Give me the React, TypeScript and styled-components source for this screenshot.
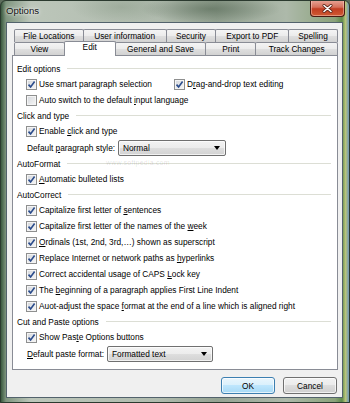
import React from "react";
import styled, { createGlobalStyle } from "styled-components";

const GlobalStyle = createGlobalStyle`
  html, body {
    margin: 0;
    padding: 0;
  }
  body {
    width: 350px;
    height: 403px;
    overflow: hidden;
    background: #5d6d5c;
  }
  * {
    box-sizing: border-box;
  }
`;

const Window = styled.div`
  width: 350px;
  height: 403px;
  display: flex;
  flex-direction: column;
  font-family: "Liberation Sans", Arial, sans-serif;
  font-size: 8.3px;
  color: #000;
  border: 1px solid #2b3a2f;
  border-radius: 6px 6px 0 0;
  overflow: hidden;
  background:
    radial-gradient(ellipse 70px 14px at 210px 8px, rgba(70, 90, 70, 0.5), transparent),
    radial-gradient(ellipse 50px 16px at 120px 6px, rgba(120, 140, 118, 0.35), transparent),
    linear-gradient(
      90deg,
      #3b5a40 0px,
      #7f957f 5px,
      #bcc6ba 30px,
      #b0bbae 45%,
      #95a393 62%,
      #adb9aa 82%,
      #8aa27a 96%,
      #5d8a4a 98%,
      #b8c47a 99%,
      #6f98b8 100%
    );
`;

const TitleBar = styled.div`
  height: 21px;
  display: flex;
  align-items: flex-start;
  padding-left: 5px;
`;

const Title = styled.span`
  font-size: 9.6px;
  line-height: 20px;
  color: #111;
  text-shadow: 0 0 5px rgba(255, 255, 255, 0.9), 0 0 2px rgba(255, 255, 255, 0.9);
`;

const CloseButton = styled.div`
  margin-left: auto;
  margin-right: 4px;
  margin-top: -1px;
  width: 35px;
  height: 17px;
  display: flex;
  align-items: center;
  justify-content: center;
  border: 1px solid #4a1a12;
  border-top: none;
  border-radius: 0 0 4px 4px;
  background: linear-gradient(#e9a79a 0%, #d5705b 45%, #c23d22 55%, #cf5a33 100%);
  box-shadow: inset 0 0 0 1px rgba(255, 220, 210, 0.45);
`;

const Client = styled.div`
  flex: 1;
  display: flex;
  flex-direction: column;
  margin: 0 6px 4px 5px;
  padding: 6px 4px 0 5px;
  border: 1px solid #52626c;
  background: #f0f0f0;
  min-height: 0;
`;

const TabStrip = styled.div`
  display: flex;
  flex-direction: column;
  padding-left: 2px;
`;

const TabRow = styled.div`
  display: flex;
  height: 13px;
`;

const Tab = styled.div<{ $w: number; $active?: boolean }>`
  position: relative;
  width: ${(p) => p.$w}px;
  height: ${(p) => (p.$active ? 15 : 13)}px;
  margin-top: ${(p) => (p.$active ? -1 : 0)}px;
  margin-left: -1px;
  z-index: ${(p) => (p.$active ? 2 : 1)};
  border: 1px solid #898c95;
  border-bottom: none;
  border-radius: 2px 2px 0 0;
  background: ${(p) =>
    p.$active
      ? "#fff"
      : "linear-gradient(#f4f4f4, #ebebeb 50%, #dfdfdf 50%, #d2d2d2)"};
  display: flex;
  align-items: ${(p) => (p.$active ? "flex-start" : "center")};
  justify-content: center;
  line-height: 11px;
  white-space: nowrap;

  &:first-child {
    margin-left: 0;
  }
`;

const Panel = styled.div`
  position: relative;
  flex: 1;
  display: flex;
  flex-direction: column;
  border: 1px solid #898c95;
  background: #fff;
  padding: 5px 6px 0 4px;
`;

const SectionHeader = styled.div`
  display: flex;
  align-items: center;
  height: 15px;
  white-space: nowrap;
`;

const Rule = styled.div`
  flex: 1;
  height: 1px;
  margin-left: 7px;
  background: #dcded5;
`;

const CheckRow = styled.div<{ $split?: boolean }>`
  display: grid;
  grid-template-columns: ${(p) => (p.$split ? "148px 1fr" : "1fr")};
  align-items: center;
  height: 16px;
  padding-left: 9px;
`;

const CheckItem = styled.label`
  display: flex;
  align-items: center;
  gap: 2px;
  white-space: nowrap;
`;

const Box = styled.span`
  width: 11px;
  height: 11px;
  flex: none;
  display: flex;
  align-items: center;
  justify-content: center;
  border: 1px solid #8e8f8f;
  background: linear-gradient(135deg, #d3d6db, #f7f7f7);
  box-shadow: inset 0 0 0 1px #f4f4f4;
`;

const SelectRow = styled.div<{ $labelWidth: number }>`
  display: grid;
  grid-template-columns: ${(p) => p.$labelWidth}px auto;
  align-items: center;
  justify-content: start;
  height: 17px;
  padding-left: 10px;
  white-space: nowrap;
`;

const Select = styled.div<{ $w: number }>`
  width: ${(p) => p.$w}px;
  height: 16px;
  display: flex;
  align-items: center;
  justify-content: space-between;
  padding: 0 5px 0 4px;
  border: 1px solid #707070;
  border-radius: 2px;
  background: linear-gradient(#f3f3f3, #ececec 50%, #dedede 50%, #d2d2d2);
  box-shadow: inset 0 0 0 1px rgba(255, 255, 255, 0.7);
`;

const Key = styled.span`
  text-decoration: underline;
  text-underline-offset: 1px;
`;

const Watermark = styled.span`
  position: absolute;
  left: 93px;
  top: 103px;
  font-size: 7px;
  color: rgba(0, 0, 0, 0.13);
  letter-spacing: 0.2px;
`;

const ButtonRow = styled.div`
  display: flex;
  justify-content: flex-end;
  gap: 8px;
  padding: 7px 1px 3px 0;
`;

const Button = styled.div<{ $default?: boolean }>`
  width: 54px;
  height: 17px;
  display: flex;
  align-items: center;
  justify-content: center;
  border-radius: 3px;
  border: 1px solid ${(p) => (p.$default ? "#3c7fb1" : "#707070")};
  background: ${(p) =>
    p.$default
      ? "linear-gradient(#eaf6fd, #d9f0fc 50%, #bee6fd 50%, #a7d9f5)"
      : "linear-gradient(#f2f2f2, #ebebeb 50%, #dddddd 50%, #cfcfcf)"};
  box-shadow: inset 0 0 0 1px rgba(255, 255, 255, 0.7);
`;

// "&x" marks the keyboard accelerator, as in a Win32 resource
const Accel = ({ text }: { text: string }) => {
  const i = text.indexOf("&");
  if (i < 0) return <>{text}</>;
  return (
    <>
      {text.slice(0, i)}
      <Key>{text[i + 1]}</Key>
      {text.slice(i + 2)}
    </>
  );
};

const Check = ({ label, checked }: { label: string; checked: boolean }) => (
  <CheckItem>
    <Box>
      {checked ? (
        <svg width="9" height="9" viewBox="0 0 9 9">
          <path d="M1.5 4.6 L3.6 6.9 L7.6 1.6" fill="none" stroke="#2b4c8c" strokeWidth="1.6" />
        </svg>
      ) : null}
    </Box>
    <span>
      <Accel text={label} />
    </span>
  </CheckItem>
);

type Item =
  | { kind: "check"; label: string; checked: boolean; second?: { label: string; checked: boolean } }
  | { kind: "select"; label: string; value: string; labelWidth: number; width: number };

type Section = { title: string; items: Item[] };

const check = (label: string, checked = true): Item => ({ kind: "check", label, checked });

const sections: Section[] = [
  {
    title: "Edit options",
    items: [
      {
        kind: "check",
        label: "Use smart paragraph selection",
        checked: true,
        second: { label: "D&rag-and-drop text editing", checked: true },
      },
      check("Auto switch to the default &input language", false),
    ],
  },
  {
    title: "Click and type",
    items: [
      check("Enable &click and type"),
      { kind: "select", label: "Default &paragraph style:", value: "Normal", labelWidth: 91, width: 108 },
    ],
  },
  {
    title: "AutoFormat",
    items: [check("&Automatic bulleted lists")],
  },
  {
    title: "AutoCorrect",
    items: [
      check("Capitalize first letter of &sentences"),
      check("Capitalize first letter of the names of the &week"),
      check("&Ordinals (1st, 2nd, 3rd,\u2026) shown as superscript"),
      check("Replace Internet or network paths as &hyperlinks"),
      check("Correct accidental usage of CAPS &Lock key"),
      check("The &beginning of a paragraph applies First Line Indent"),
      check("Auot-adjust the space &format at the end of a line which is aligned right"),
    ],
  },
  {
    title: "Cut and Paste options",
    items: [
      check("Show Pas&te Options buttons"),
      { kind: "select", label: "&Default paste format:", value: "Formatted text", labelWidth: 80, width: 106 },
    ],
  },
];

const topTabs = [
  { label: "File Locations", w: 70 },
  { label: "User information", w: 84 },
  { label: "Security", w: 51 },
  { label: "Export to PDF", w: 74 },
  { label: "Spelling", w: 50 },
];

const bottomTabs = [
  { label: "View", w: 51 },
  { label: "Edit", w: 52, active: true },
  { label: "General and Save", w: 92 },
  { label: "Print", w: 51 },
  { label: "Track Changes", w: 83 },
];

const App = () => (
  <>
    <GlobalStyle />
    <Window>
      <TitleBar>
        <Title>Options</Title>
        <CloseButton>
          <svg width="11" height="9" viewBox="0 0 11 9">
            <path d="M2 1.5 L9 7.5 M9 1.5 L2 7.5" stroke="#5a2418" strokeWidth="3" strokeLinecap="round" />
            <path d="M2 1.5 L9 7.5 M9 1.5 L2 7.5" stroke="#fff" strokeWidth="1.6" strokeLinecap="round" />
          </svg>
        </CloseButton>
      </TitleBar>
      <Client>
        <TabStrip>
          <TabRow>
            {topTabs.map((t) => (
              <Tab key={t.label} $w={t.w}>
                {t.label}
              </Tab>
            ))}
          </TabRow>
          <TabRow>
            {bottomTabs.map((t) => (
              <Tab key={t.label} $w={t.w} $active={t.active}>
                {t.label}
              </Tab>
            ))}
          </TabRow>
        </TabStrip>
        <Panel>
          {sections.map((s) => (
            <React.Fragment key={s.title}>
              <SectionHeader>
                {s.title}
                <Rule />
              </SectionHeader>
              {s.items.map((it) =>
                it.kind === "check" ? (
                  <CheckRow key={it.label} $split={!!it.second}>
                    <Check label={it.label} checked={it.checked} />
                    {it.second ? <Check label={it.second.label} checked={it.second.checked} /> : null}
                  </CheckRow>
                ) : (
                  <SelectRow key={it.label} $labelWidth={it.labelWidth}>
                    <span>
                      <Accel text={it.label} />
                    </span>
                    <Select $w={it.width}>
                      <span>{it.value}</span>
                      <svg width="6" height="4" viewBox="0 0 6 4">
                        <path d="M0 0 H6 L3 4 Z" fill="#000" />
                      </svg>
                    </Select>
                  </SelectRow>
                )
              )}
            </React.Fragment>
          ))}
          <Watermark>www.softpedia.com</Watermark>
        </Panel>
        <ButtonRow>
          <Button $default>OK</Button>
          <Button>Cancel</Button>
        </ButtonRow>
      </Client>
    </Window>
  </>
);

export default App;
